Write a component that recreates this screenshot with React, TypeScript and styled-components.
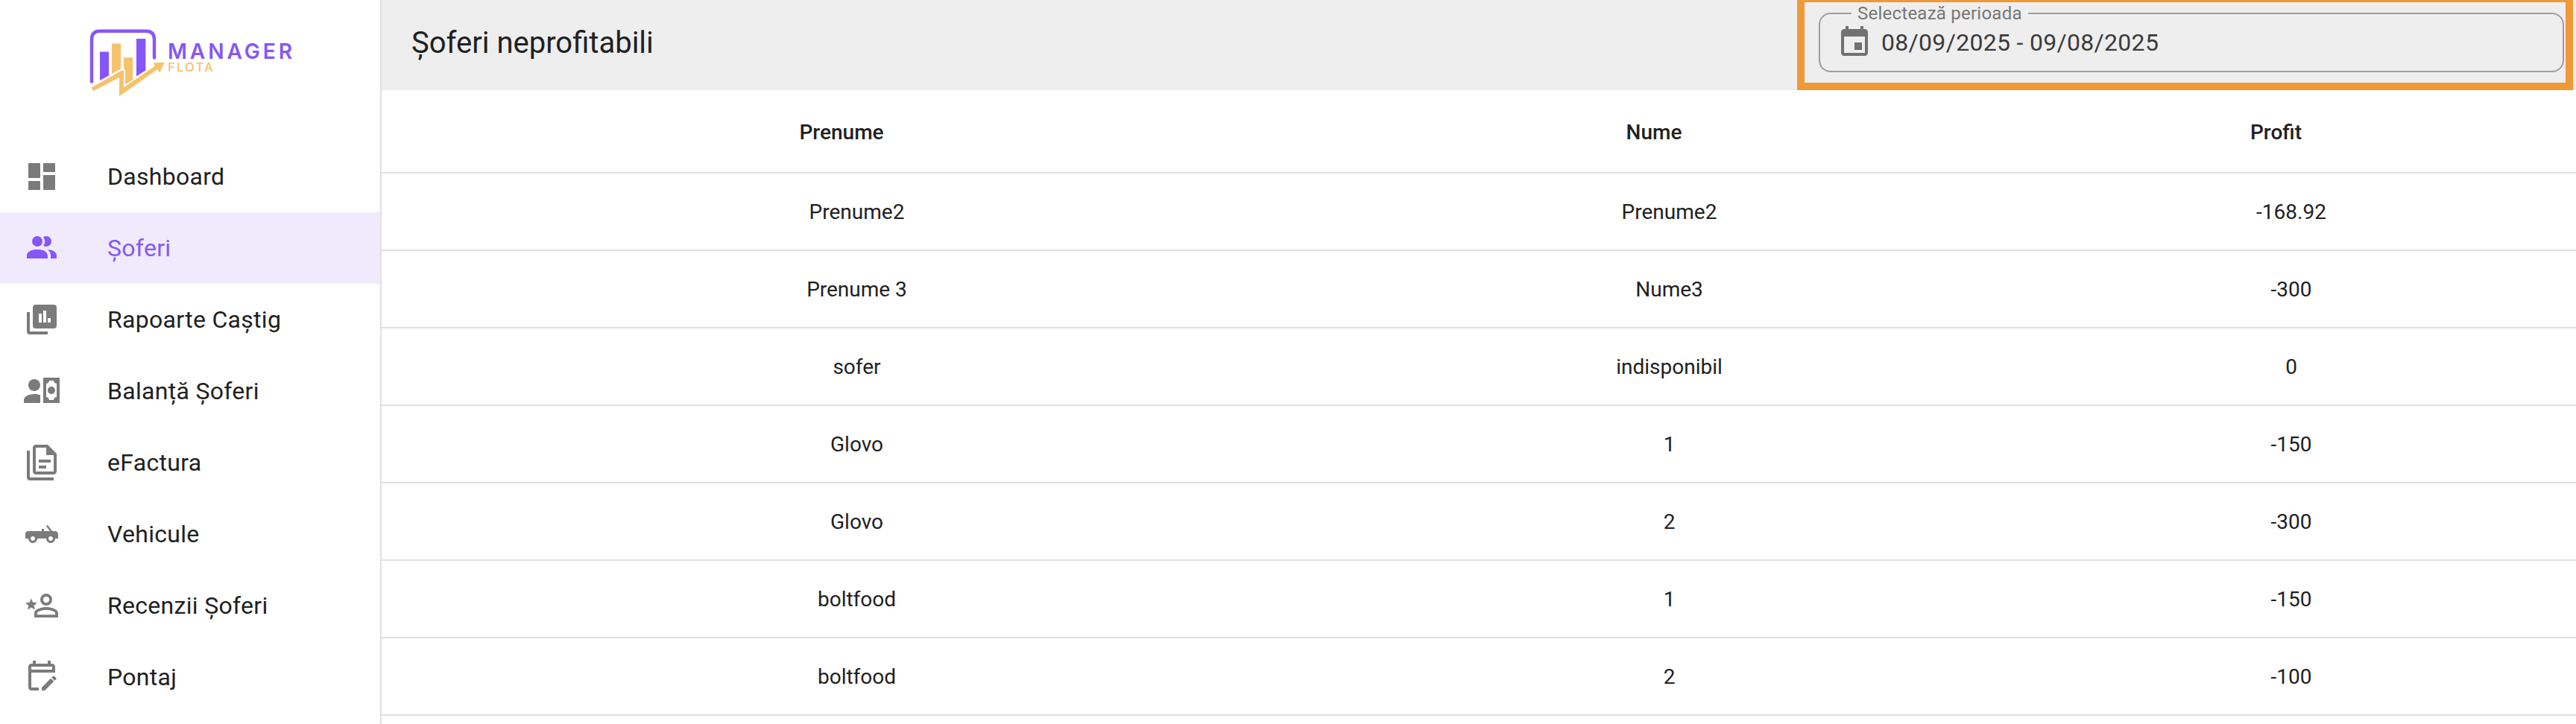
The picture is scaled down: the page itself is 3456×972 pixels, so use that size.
import styled, { createGlobalStyle, css } from "styled-components";

const menu = [
  {
    label: "Dashboard",
    icon: "M3 13h8V3H3v10zm0 8h8v-6H3v6zm10 0h8V11h-8v10zm0-18v6h8V3h-8z",
  },
  {
    label: "Șoferi",
    active: true,
    icon: "M16 17V19H2V17S2 13 9 13 16 17 16 17M12.5 7.5A3.5 3.5 0 1 0 9 11A3.5 3.5 0 0 0 12.5 7.5M15.94 13A5.32 5.32 0 0 1 18 17V19H22V17S22 13.37 15.94 13M15 4A3.39 3.39 0 0 0 13.07 4.59A5 5 0 0 1 13.07 10.41A3.39 3.39 0 0 0 15 11A3.5 3.5 0 0 0 15 4Z",
  },
  {
    label: "Rapoarte Caștig",
    icon: "M8 2H20A2 2 0 0 1 22 4V16A2 2 0 0 1 20 18H8A2 2 0 0 1 6 16V4A2 2 0 0 1 8 2M10 8V14H12V8H10M13 6V14H15V6H13M16 11V14H18V11H16M2 7H4V20H16V22H4A2 2 0 0 1 2 20V7Z",
  },
  {
    label: "Balanță Șoferi",
    icon: "M11 8C11 10.21 9.21 12 7 12C4.79 12 3 10.21 3 8C3 5.79 4.79 4 7 4C9.21 4 11 5.79 11 8M11 14.72V20H0V18C0 15.79 3.13 14 7 14C8.5 14 9.87 14.27 11 14.72M24 20H13V3H24V20M16 11.5C16 12.88 17.12 14 18.5 14C19.88 14 21 12.88 21 11.5C21 10.12 19.88 9 18.5 9C17.12 9 16 10.12 16 11.5M22 7C20.9 7 20 6.11 20 5H17C17 6.11 16.11 7 15 7V16C16.11 16 17 16.9 17 18H20C20 16.9 20.9 16 22 16V7Z",
  },
  {
    label: "eFactura",
    icon: "M16 0H8C6.9 0 6 .9 6 2V18C6 19.1 6.9 20 8 20H20C21.1 20 22 19.1 22 18V6L16 0M20 18H8V2H15V7H20V18M4 4V22H20V24H4C2.9 24 2 23.1 2 22V4H4M10 10V12H18V10H10M10 14V16H15V14H10Z",
  },
  {
    label: "Vehicule",
    icon: "M16 6L15 6.75L17.5 10H13.5V8.5H12V10H3C1.89 10 1 10.89 1 12V15H3C3 16.66 4.34 18 6 18S9 16.66 9 15H15C15 16.66 16.34 18 18 18S21 16.66 21 15H23V12C23 10.89 22.11 10 21 10H19L16 6M6 13.5C6.83 13.5 7.5 14.17 7.5 15S6.83 16.5 6 16.5 4.5 15.83 4.5 15 5.17 13.5 6 13.5M18 13.5C18.83 13.5 19.5 14.17 19.5 15S18.83 16.5 18 16.5 16.5 15.83 16.5 15 17.17 13.5 18 13.5Z",
  },
  {
    label: "Recenzii Șoferi",
    icon: "M15 4A4 4 0 0 0 11 8A4 4 0 0 0 15 12A4 4 0 0 0 19 8A4 4 0 0 0 15 4M15 5.9A2.1 2.1 0 1 1 12.9 8A2.1 2.1 0 0 1 15 5.9M15 13C12.33 13 7 14.33 7 17V20H23V17C23 14.33 17.67 13 15 13M15 14.9C17.97 14.9 21.1 16.36 21.1 17V18.1H8.9V17C8.9 16.36 12 14.9 15 14.9M5 13.28L7.45 14.77L6.8 11.96L9 10.08L6.11 9.83L5 7.19L3.87 9.83L1 10.08L3.18 11.96L2.5 14.77L5 13.28Z",
  },
  {
    label: "Pontaj",
    icon: "M19 3H18V1H16V3H8V1H6V3H5C3.9 3 3 3.9 3 5V19C3 20.1 3.9 21 5 21H10V19H5V9H21V5C21 3.9 20.1 3 19 3M19 7H5V5H19V7M21.7 13.35L20.7 14.35L18.65 12.35L19.65 11.35C19.85 11.14 20.19 11.13 20.42 11.35L21.7 12.63C21.89 12.83 21.89 13.15 21.7 13.35M12 18.94V21H14.06L20.12 14.88L18.07 12.88L12 18.94Z",
  },
];

const drivers = [
  { firstName: "Prenume2", lastName: "Prenume2", profit: "-168.92" },
  { firstName: "Prenume 3", lastName: "Nume3", profit: "-300" },
  { firstName: "sofer", lastName: "indisponibil", profit: "0" },
  { firstName: "Glovo", lastName: "1", profit: "-150" },
  { firstName: "Glovo", lastName: "2", profit: "-300" },
  { firstName: "boltfood", lastName: "1", profit: "-150" },
  { firstName: "boltfood", lastName: "2", profit: "-100" },
];

function Logo() {
  return (
    <LogoSvg viewBox="0 0 280 100" role="img">
      <path
        d="M3 70.5V14Q3 2.7 14 2.7H76Q87 2.7 87 14V38.5"
        fill="none"
        stroke="#8657f8"
        strokeWidth="4.4"
        strokeLinecap="round"
      />
      <path d="M14 30.6H26V62.4L14 69Z" fill="#8657f8" />
      <path d="M63 13H75.4V55.6L63 63.6Z" fill="#8657f8" />
      <path d="M30 19.4H42V53.4L30 60Z" fill="#f6c26b" />
      <path d="M46 38.3H58V68.3L48 74.6V55L46 52.6Z" fill="#f6c26b" />
      <path
        d="M2.3 78.7L44.3 55L46 56V78.3L87.7 49.7L86 45.3L100.7 44.7L94.3 58.7L91.3 54L40 90.3V65L5.3 83.3Z"
        fill="#f6c26b"
      />
      <text
        x="105"
        y="40"
        fontSize="29"
        fontWeight="600"
        letterSpacing="4"
        textLength="171"
        lengthAdjust="spacingAndGlyphs"
        fill="#8657f8"
      >
        MANAGER
      </text>
      <text
        x="105"
        y="57"
        fontSize="16.5"
        fontWeight="500"
        letterSpacing="2"
        textLength="63"
        lengthAdjust="spacingAndGlyphs"
        fill="#f6c26b"
      >
        FLOTA
      </text>
    </LogoSvg>
  );
}

export default function App() {
  return (
    <Layout>
      <GlobalStyle />
      <Sidebar>
        <LogoLink>
          <Logo />
        </LogoLink>
        <nav>
          {menu.map((item) => (
            <MenuItem key={item.label} $active={item.active}>
              <Icon viewBox="0 0 24 24">
                <path d={item.icon} fillRule="evenodd" />
              </Icon>
              <span>{item.label}</span>
            </MenuItem>
          ))}
        </nav>
      </Sidebar>

      <Content>
        <Toolbar>
          <Title>Șoferi neprofitabili</Title>
          <Highlight>
            <PeriodField>
              <legend>Selectează perioada</legend>
              <PeriodValue>
                <Icon viewBox="0 0 24 24">
                  <path d="M17 12h-5v5h5v-5zM16 1v2H8V1H6v2H5c-1.11 0-1.99.9-1.99 2L3 19c0 1.1.89 2 2 2h14c1.1 0 2-.9 2-2V5c0-1.1-.9-2-2-2h-1V1h-2zm3 18H5V8h14v11z" />
                </Icon>
                08/09/2025 - 09/08/2025
              </PeriodValue>
            </PeriodField>
          </Highlight>
        </Toolbar>

        <HeadRow>
          <HeadCell>Prenume</HeadCell>
          <HeadCell>Nume</HeadCell>
          <HeadCell>Profit</HeadCell>
        </HeadRow>
        {drivers.map((driver, i) => (
          <Row key={i}>
            <Cell>{driver.firstName}</Cell>
            <Cell>{driver.lastName}</Cell>
            <Cell>{driver.profit}</Cell>
          </Row>
        ))}
      </Content>
    </Layout>
  );
}

const GlobalStyle = createGlobalStyle`
  * {
    box-sizing: border-box;
  }
  body {
    margin: 0;
    background: #fff;
    color: #212121;
    font-family: Roboto, "Liberation Sans", sans-serif;
    overflow: hidden;
  }
`;

const Layout = styled.div`
  display: flex;
  height: 972px;
  overflow: hidden;
`;

const Sidebar = styled.aside`
  flex: none;
  width: 512px;
  border-right: 2px solid #e0e0e0;
`;

const LogoLink = styled.div`
  height: 189px;
  padding: 39px 0 0 120px;
`;

const LogoSvg = styled.svg`
  display: block;
  width: 280px;
  height: 100px;
  font-family: Inter, sans-serif;
`;

const Icon = styled.svg`
  flex: none;
  width: 48px;
  height: 48px;
  fill: #7b7b7b;
`;

const MenuItem = styled.div<{ $active?: boolean }>`
  display: flex;
  align-items: center;
  gap: 64px;
  height: 96px;
  padding: 0 32px;
  font-size: 32px;
  line-height: 48px;
  letter-spacing: 0.3px;

  ${({ $active }) =>
    $active &&
    css`
      background: #efeafc;
      color: #8657f8;

      ${Icon} {
        fill: #8657f8;
      }
    `}
`;

const Content = styled.main`
  flex: 1;
  min-width: 0;
`;

const Toolbar = styled.header`
  display: flex;
  justify-content: space-between;
  height: 121px;
  padding: 0 4px 0 40px;
  background: #eee;
`;

const Title = styled.h1`
  margin: 26px 0 0;
  font-size: 40px;
  font-weight: 400;
  line-height: 64px;
`;

const Highlight = styled.div`
  width: 1041px;
  height: 121px;
  padding: 8px 2px 0 19px;
  border: 10px solid #f09937;
  border-top-width: 3px;
`;

const PeriodField = styled.fieldset`
  width: 1000px;
  height: 86px;
  margin: 0;
  padding: 0 22px;
  border: 2px solid #9e9e9e;
  border-radius: 16px;

  legend {
    margin-left: 20px;
    padding: 0 8px;
    color: #777;
    font-size: 24px;
    line-height: 14px;
    letter-spacing: 0.24px;
  }
`;

const PeriodValue = styled.div`
  display: flex;
  align-items: center;
  gap: 12px;
  height: 48px;
  margin-top: 8px;
  color: #3b3b3b;
  font-size: 32px;
  letter-spacing: 0.3px;

  ${Icon} {
    fill: #717171;
  }
`;

const Row = styled.div`
  display: grid;
  grid-template-columns: 1275px 905px 1fr;
  align-items: center;
  height: 104px;
  padding-top: 2px;
  border-bottom: 2px solid #e0e0e0;
`;

const HeadRow = styled(Row)`
  height: 112px;
  padding-top: 4px;
`;

const Cell = styled.div`
  font-size: 28px;
  line-height: 40px;
  text-align: center;
`;

const HeadCell = styled(Cell)`
  padding-right: 41px;
  font-weight: 500;
`;
